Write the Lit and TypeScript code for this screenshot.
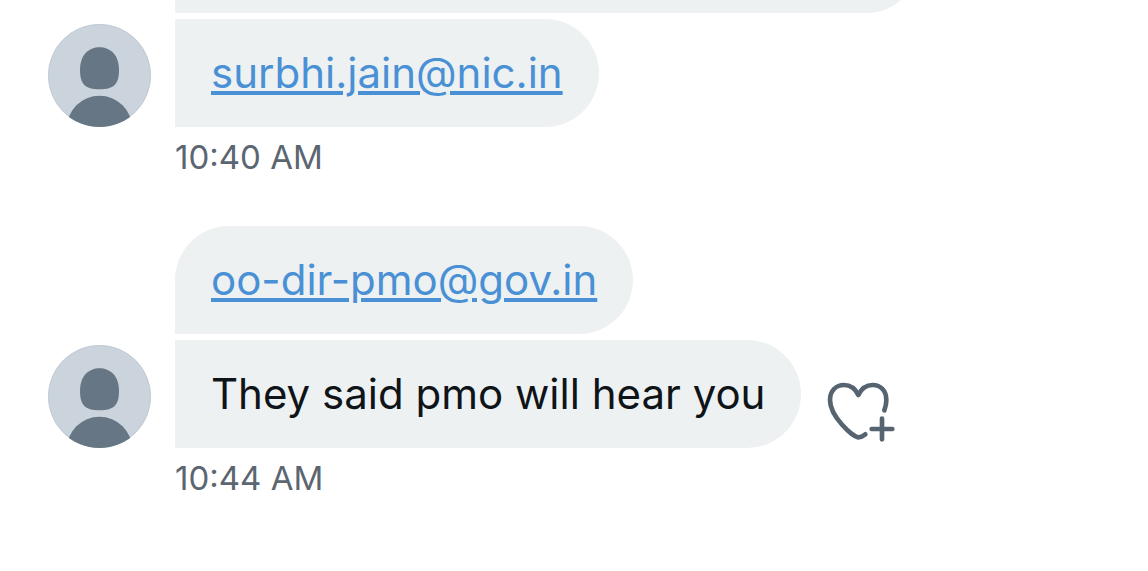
import { LitElement, html, svg, css } from "lit";
import { customElement, property } from "lit/decorators.js";

interface Message {
  text: string;
  email?: boolean;
  reactable?: boolean;
}

interface Group {
  time: string;
  continued?: boolean;
  messages: Message[];
}

const groups: Group[] = [
  {
    time: "10:40 AM",
    continued: true,
    messages: [{ text: "" }, { text: "surbhi.jain@nic.in", email: true }],
  },
  {
    time: "10:44 AM",
    messages: [
      { text: "oo-dir-pmo@gov.in", email: true },
      { text: "They said pmo will hear you", reactable: true },
    ],
  },
];

@customElement("user-avatar")
class UserAvatar extends LitElement {
  static styles = css`
    :host {
      display: block;
      width: 103px;
      height: 103px;
      flex: none;
    }
    .picture {
      display: block;
      width: 100%;
      height: 100%;
    }
  `;

  render() {
    return html`
      <svg class="picture" viewBox="0 0 309 309" role="img" aria-label="Profile picture">
        ${svg`
          <defs><clipPath id="disc"><circle cx="154.5" cy="154.5" r="154.5" /></clipPath></defs>
          <circle cx="154.5" cy="154.5" r="153.5" fill="#cbd4dc" stroke="#b4bfc8" stroke-width="2" />
          <g clip-path="url(#disc)" fill="#677684">
            <path d="M154.5 70C186 70 213 92 213 138C213 179 199 196 154.5 196C110 196 96 179 96 138C96 92 123 70 154.5 70Z" />
            <circle cx="154.5" cy="313" r="98" />
          </g>
        `}
      </svg>
    `;
  }
}

@customElement("message-group")
class MessageGroup extends LitElement {
  @property({ attribute: false }) group!: Group;

  static styles = css`
    :host {
      display: block;
    }
    .row {
      display: flex;
      align-items: flex-end;
      gap: 24px;
    }
    .bubbles {
      display: flex;
      flex-direction: column;
      align-items: flex-start;
      gap: 6px;
      flex: 1;
      min-width: 0;
    }
    .line {
      display: flex;
      align-items: flex-end;
      gap: 26px;
      max-width: 100%;
    }
    .bubble {
      box-sizing: border-box;
      min-height: 108px;
      padding: 26px 36px;
      border-radius: 0 54px 54px 0;
      background: #edf1f2;
      color: #0f1419;
      font-size: 42px;
      line-height: 56px;
      overflow-wrap: anywhere;
    }
    .first {
      border-top-left-radius: 54px;
    }
    .blank {
      width: 745px;
      max-width: 100%;
    }
    .link {
      color: #4a90d5;
      text-decoration-line: underline;
      text-decoration-thickness: 4px;
      text-underline-offset: 3px;
    }
    .react {
      display: block;
      flex: none;
      margin: 0 0 6px;
      padding: 0;
      border: 0;
      background: none;
      color: #566370;
      cursor: pointer;
    }
    .heart {
      display: block;
      width: 68px;
      height: 60px;
    }
    .time {
      display: block;
      margin: 12px 0 0 127px;
      color: #5b6671;
      font-size: 33px;
      line-height: 36px;
    }
  `;

  private renderMessage(message: Message, index: number) {
    const first = index === 0 && !this.group.continued ? "first" : "";
    const blank = message.text ? "" : "blank";
    return html`
      <div class="line">
        <div class="bubble ${first} ${blank}">${message.email
          ? html`<a class="link" href="mailto:${message.text}">${message.text}</a>`
          : message.text}</div>
        ${message.reactable
          ? html`<button class="react" type="button" aria-label="Add reaction">
              <svg class="heart" viewBox="75 66 204 180" fill="none" stroke="currentColor" stroke-width="14" stroke-linecap="round" stroke-linejoin="round" aria-hidden="true">
                <path d="M190 223C181 230 176 232 168 232C153 230 84 171 84 120C84 92 102 75 126 75C147 75 160 86 169 105C178 86 191 75 212 75C236 75 253 92 253 120C253 132 250 143 247 151" />
                <path d="M240 176V238M209 207H271" />
              </svg>
            </button>`
          : ""}
      </div>
    `;
  }

  render() {
    return html`
      <div class="row">
        <user-avatar></user-avatar>
        <div class="bubbles">${this.group.messages.map((m, i) => this.renderMessage(m, i))}</div>
      </div>
      <time class="time">${this.group.time}</time>
    `;
  }
}

@customElement("app-root")
class AppRoot extends LitElement {
  static styles = css`
    :host {
      display: flex;
      flex-direction: column;
      justify-content: flex-end;
      gap: 51px;
      box-sizing: border-box;
      height: 100vh;
      padding: 0 48px 75px;
      overflow: hidden;
      background: #ffffff;
      font-family: Inter, "Liberation Sans", sans-serif;
    }
    .group {
      flex: none;
    }
  `;

  render() {
    return groups.map((g) => html`<message-group class="group" .group=${g}></message-group>`);
  }
}
